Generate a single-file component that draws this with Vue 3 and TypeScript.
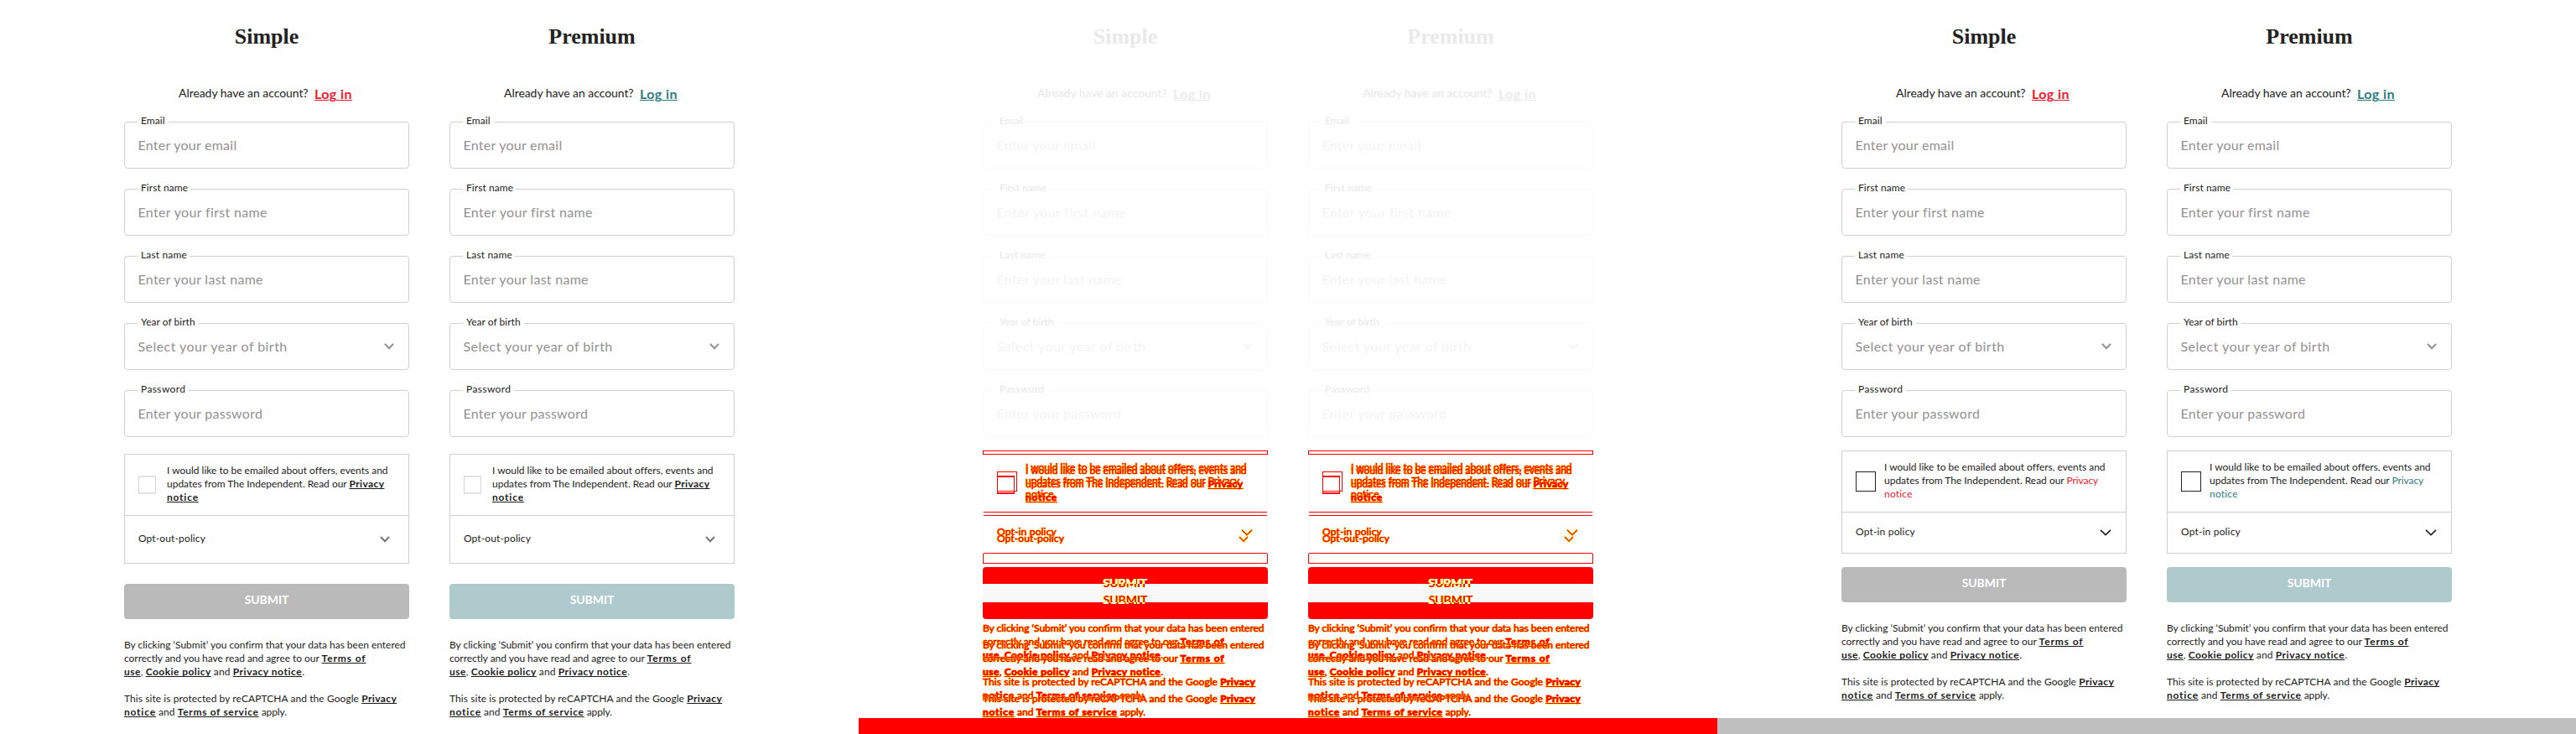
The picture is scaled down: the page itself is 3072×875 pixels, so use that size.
<script setup lang="ts">
interface Segment {
  text: string
  spacing: number
  link?: boolean
}
type Line = Segment[]
interface Variant {
  id: 'before' | 'after'
  policy: string
  policySpacing: number
  consent: Line[]
}
interface Panel {
  id: 'old' | 'diff' | 'new'
  variants: Variant[]
}

const fields = [
  { label: 'Email', ls: 0.04, width: 37, hint: 'Enter your email', hs: 0.25 },
  { label: 'First name', ls: 0.07, width: 63, hint: 'Enter your first name', hs: 0.34 },
  { label: 'Last name', ls: 0.15, width: 62, hint: 'Enter your last name', hs: 0.28 },
  { label: 'Year of birth', ls: 0.02, width: 73, hint: 'Select your year of birth', hs: 0.44, select: true },
  { label: 'Password', ls: 0.38, width: 61, hint: 'Enter your password', hs: 0.27 },
]

const intro: Line = [{ text: 'I would like to be emailed about offers, events and', spacing: -0.01 }]
const introEnd: Segment = { text: 'updates from The Independent. Read our ', spacing: -0.02 }

const before: Variant = {
  id: 'before',
  policy: 'Opt-out-policy',
  policySpacing: 0.12,
  consent: [
    intro,
    [introEnd, { text: 'Privacy', spacing: 0.39, link: true }],
    [{ text: 'notice', spacing: 0.78, link: true }],
  ],
}
const after: Variant = {
  id: 'after',
  policy: 'Opt-in policy',
  policySpacing: 0.17,
  consent: [
    intro,
    [introEnd, { text: 'Privacy', spacing: -0.08, link: true }],
    [{ text: 'notice', spacing: 0.2, link: true }],
  ],
}

const panels: Panel[] = [
  { id: 'old', variants: [before] },
  { id: 'diff', variants: [after, before] },
  { id: 'new', variants: [after] },
]
const plans = ['Simple', 'Premium']

const legal: Line[][] = [
  [
    [{ text: 'By clicking ‘Submit’ you confirm that your data has been entered', spacing: -0.02 }],
    [
      { text: 'correctly and you have read and agree to our ', spacing: -0.04 },
      { text: 'Terms of', spacing: 0.88, link: true },
    ],
    [
      { text: 'use', spacing: 0.42, link: true },
      { text: ', ', spacing: 0.1 },
      { text: 'Cookie policy', spacing: 0.44, link: true },
      { text: ' and ', spacing: 0.1 },
      { text: 'Privacy notice', spacing: 0.53, link: true },
      { text: '.', spacing: 0 },
    ],
  ],
  [
    [
      { text: 'This site is protected by reCAPTCHA and the Google ', spacing: 0.07 },
      { text: 'Privacy', spacing: 0.39, link: true },
    ],
    [
      { text: 'notice', spacing: 0.78, link: true },
      { text: ' and ', spacing: 0.1 },
      { text: 'Terms of service', spacing: 0.66, link: true },
      { text: ' apply.', spacing: -0.1 },
    ],
  ],
]
</script>

<template>
  <main class="page">
    <section v-for="panel in panels" :key="panel.id" class="panel" :class="panel.id">
      <form v-for="plan in plans" :key="plan" class="form" :class="plan.toLowerCase()">
        <h2 class="title">{{ plan }}</h2>
        <div class="account">
          <span class="question">Already have an account?</span>
          <a class="login">Log in</a>
        </div>
        <div class="fields">
          <div v-for="f in fields" :key="f.label" class="field">
            <span class="label" :style="{ letterSpacing: f.ls + 'px', width: f.width + 'px' }">{{ f.label }}</span>
            <span :style="{ letterSpacing: f.hs + 'px' }">{{ f.hint }}</span>
            <svg v-if="f.select" class="chevron" width="12" height="8" viewBox="0 0 12 8">
              <path d="M1 1 L6 6.2 L11 1" />
            </svg>
          </div>
        </div>
        <div class="stack">
          <div v-for="v in panel.variants" :key="v.id" class="variant" :class="v.id">
            <div class="box">
              <div class="consent">
                <span class="check"></span>
                <div class="copy">
                  <p v-for="(line, i) in v.consent" :key="i" class="line">
                    <span
                      v-for="(s, j) in line"
                      :key="j"
                      :class="{ link: s.link }"
                      :style="{ letterSpacing: s.spacing + 'px' }"
                    >{{ s.text }}</span>
                  </p>
                </div>
              </div>
              <div class="policy">
                <span class="name" :style="{ letterSpacing: v.policySpacing + 'px' }">{{ v.policy }}</span>
                <svg v-if="v.id === 'before'" class="chevron" width="12" height="8" viewBox="0 0 12 8">
                  <path d="M1 1 L6 6.2 L11 1" />
                </svg>
                <svg v-else class="chevron thin" width="14" height="8" viewBox="0 0 14 8">
                  <path d="M1 0.8 L7 6.6 L13 0.8" />
                </svg>
              </div>
            </div>
            <div class="submit"><span class="caption">SUBMIT</span></div>
            <div class="legal">
              <div v-for="(para, k) in legal" :key="k" class="para">
                <p v-for="(line, i) in para" :key="i" class="line">
                  <span
                    v-for="(s, j) in line"
                    :key="j"
                    :class="{ link: s.link }"
                    :style="{ letterSpacing: s.spacing + 'px' }"
                  >{{ s.text }}</span>
                </p>
              </div>
            </div>
          </div>
        </div>
      </form>
    </section>
  </main>
</template>

<style>
body {
  margin: 0;
  background: #fff;
}
</style>

<style scoped>
.page {
  display: grid;
  grid-template-columns: repeat(3, 1024px);
  height: 875px;
  overflow: hidden;
  font-family: Lato, 'Liberation Sans', sans-serif;
}
.panel {
  --ink: #1c1c1c;
  --hint: #929292;
  --line: #cfcfcf;
  --title: #222;
  box-sizing: border-box;
  height: 875px;
  display: flex;
  justify-content: center;
  gap: 48px;
  overflow: hidden;
}
.simple {
  --brand: #ec1a2e;
  --button: #bababa;
}
.premium {
  --brand: #2f7c80;
  --button: #aecacd;
}
.new {
  border-bottom: 19px solid #bfbfbf;
}
.diff {
  --ink: #e7e7e7;
  --hint: #f3f3f3;
  --line: #f9f9f9;
  --title: #e9e9e9;
  border-bottom: 19px solid #f00;
}
.diff .form {
  --brand: #ebebeb;
}
.form {
  width: 340px;
  flex: none;
  color: var(--ink);
}
.title {
  margin: 24px 0 0;
  font: 700 26px/40px 'Liberation Serif', serif;
  text-align: center;
  color: var(--title);
}
.account {
  display: flex;
  margin-top: 35px;
  padding-left: 65px;
  height: 46px;
  line-height: 24px;
}
.question {
  width: 162px;
  font-size: 14px;
  letter-spacing: -0.06px;
  white-space: nowrap;
}
.login {
  margin-top: 1px;
  font-size: 16px;
  font-weight: 700;
  letter-spacing: 0.42px;
  color: var(--brand);
  text-decoration: underline 1px;
  text-underline-offset: 1px;
}
.fields {
  display: grid;
  gap: 24px;
}
.field {
  position: relative;
  box-sizing: border-box;
  display: flex;
  align-items: center;
  justify-content: space-between;
  height: 56px;
  padding: 0 17px 0 15.5px;
  border: 1px solid var(--line);
  border-radius: 4px;
  font-size: 16px;
  line-height: 54px;
  color: var(--hint);
  white-space: nowrap;
}
.label {
  position: absolute;
  top: -11px;
  left: 15px;
  box-sizing: border-box;
  padding-left: 4px;
  background: #fff;
  font-size: 12px;
  line-height: 18px;
  color: var(--ink);
}
.chevron {
  flex: none;
  fill: none;
  stroke: var(--hint);
  stroke-width: 2;
}
.stack {
  display: grid;
}
.variant {
  grid-area: 1 / 1;
}
.before {
  padding-top: 20px;
}
.after {
  padding-top: 16px;
}
.box {
  border: 1px solid var(--line);
}
.consent {
  display: flex;
  height: 72px;
  border-bottom: 1px solid var(--line);
}
.check {
  box-sizing: border-box;
  flex: none;
  width: 21px;
  height: 22px;
  margin: 25px 13px 0 16px;
  border-style: solid;
  border-width: 2px 1px;
  border-color: #e3e3e3 #d6d6d6;
}
.after .check {
  width: 24px;
  height: 24px;
  margin: 24px 10px 0 16px;
  border: 1px solid #222;
}
.copy {
  padding-top: 11px;
}
.line {
  margin: 0;
  font-size: 12px;
  line-height: 16px;
  white-space: pre;
}
.link {
  font-weight: 700;
  text-decoration: underline 1px;
  text-underline-offset: 1px;
  text-decoration-skip-ink: none;
}
.after .copy .link {
  font-weight: 400;
  color: var(--brand);
  text-decoration: none;
}
.policy {
  display: flex;
  align-items: center;
  justify-content: space-between;
  height: 56px;
  padding: 0 22px 0 16px;
}
.name {
  align-self: flex-start;
  font-size: 12px;
  line-height: 53px;
}
.before .policy .chevron {
  stroke: #777;
}
.after .policy {
  height: 48px;
  padding-right: 17px;
}
.after .name {
  line-height: 45px;
}
.after .policy .thin {
  stroke: #222;
  stroke-width: 1.7;
}
.submit {
  height: 42px;
  margin-top: 24px;
  border-radius: 4px;
  background: var(--button);
  color: #fff;
  font-size: 14px;
  font-weight: 700;
  line-height: 37px;
  letter-spacing: -0.08px;
  text-align: center;
}
.caption {
  display: block;
}
.after .submit {
  margin-top: 16px;
}
.legal {
  padding-top: 23px;
}
.para + .para {
  margin-top: 16px;
}

/* Overlaid variants, changed pixels in red with yellow edges */
.diff .variant {
  --line: #f00;
  color: #f00;
  text-shadow: 1px 0 #ffff00a6, -1px 0 #ffff00a6, 0 1px #ffff0080, 0 -1px #ffff0080;
}
.diff .variant .line,
.diff .variant .name {
  -webkit-text-stroke: 0.5px;
}
.diff .after .box {
  border-image: linear-gradient(#f00 4px, #f9f9f9 4px, #f9f9f9 calc(100% - 1px), #f00 0) 1;
}
.diff .before .box {
  border-image: linear-gradient(#f00 1px, #f9f9f9 1px, #f9f9f9 119px, #f00 119px) 1;
}
.diff .variant .check {
  border-color: #f00;
}
.diff .after .copy .link {
  color: #f00;
}
.diff .variant .policy .chevron {
  stroke: #f00;
  stroke-width: 1.2;
  filter: drop-shadow(0 1px 0 #ff0) drop-shadow(0 -1px 0 #ff0);
}
.diff .after .submit {
  background: linear-gradient(#f00 20px, #f8f8f8 20px);
}
.diff .before .submit {
  background: linear-gradient(transparent 22px, #f00 22px);
}
.diff .caption {
  height: 42px;
  color: transparent;
  text-shadow: none;
  background: linear-gradient(#fff 20px, #f00 20px);
  background-clip: text;
  filter: drop-shadow(0.6px 0 0 #ff0) drop-shadow(-0.6px 0 0 #ff0);
}
.diff .before .caption {
  background: linear-gradient(#f00 22px, #fff 22px);
  background-clip: text;
}
</style>
